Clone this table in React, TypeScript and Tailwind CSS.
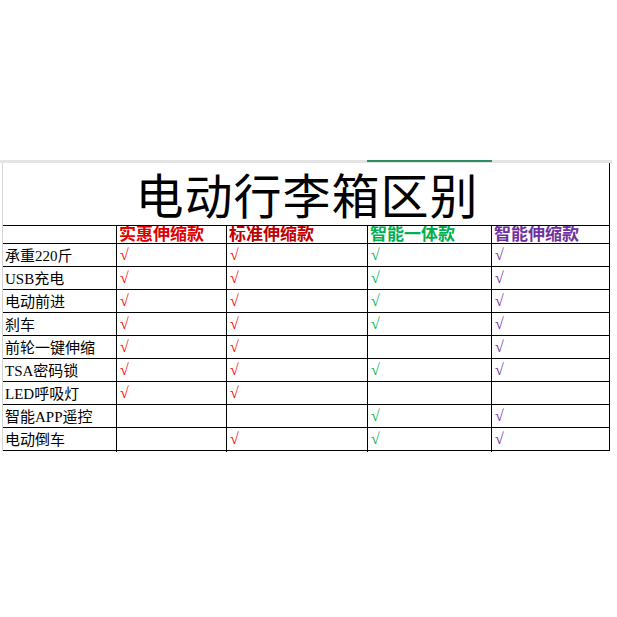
const FONT = '"Liberation Serif", "Noto Sans CJK SC", serif';

type Mark = '' | 'v';

const features: { name: string; marks: [Mark, Mark, Mark, Mark] }[] = [
  { name: '承重220斤', marks: ['v', 'v', 'v', 'v'] },
  { name: 'USB充电', marks: ['v', 'v', 'v', 'v'] },
  { name: '电动前进', marks: ['v', 'v', 'v', 'v'] },
  { name: '刹车', marks: ['v', 'v', 'v', 'v'] },
  { name: '前轮一键伸缩', marks: ['v', 'v', '', 'v'] },
  { name: 'TSA密码锁', marks: ['v', 'v', 'v', 'v'] },
  { name: 'LED呼吸灯', marks: ['v', 'v', '', ''] },
  { name: '智能APP遥控', marks: ['', '', 'v', 'v'] },
  { name: '电动倒车', marks: ['', 'v', 'v', 'v'] },
];

const models = [
  { label: '实惠伸缩款', head: 'text-[#e00000]', check: 'text-[#ff0000]' },
  { label: '标准伸缩款', head: 'text-[#c00000]', check: 'text-[#ff0000]' },
  { label: '智能一体款', head: 'text-[#00b050]', check: 'text-[#00b050]' },
  { label: '智能伸缩款', head: 'text-[#7030a0]', check: 'text-[#7030a0]' },
];

const grid = 'grid grid-cols-[114px_110px_141px_124px_117px]';

export default function App() {
  return (
    <div className="w-[617px] h-[617px] bg-white pt-[160px]" style={{ fontFamily: FONT }}>
      {/* sheet column header strip */}
      <div className="h-[3px] w-[612px] bg-[#e4e4e4] flex">
        <div className="w-[367px]" />
        <div className="w-[125px] h-[2px] bg-[#2e8b62]" />
      </div>

      <div className="ml-[2px] w-[608px] border-l border-[#d4d4d4] border-r border-r-black">
        {/* title */}
        <div className="h-[63px] border-b border-black flex items-end justify-center pb-[3px] pl-[2px]">
          <span className="text-[48px] leading-none text-black tracking-[1px]">电动行李箱区别</span>
        </div>

        {/* header row */}
        <div className={`${grid} h-[18px] border-b border-black`}>
          <div className="border-r border-black" />
          {models.map((m, i) => (
            <div
              key={m.label}
              className={`${i < 3 ? 'border-r border-black' : ''} pl-[2px] text-[17px] font-bold leading-[18px] overflow-hidden whitespace-nowrap ${m.head}`}
            >
              {m.label}
            </div>
          ))}
        </div>

        {/* feature rows */}
        {features.map((f) => (
          <div key={f.name} className={`${grid} h-[23px] border-b border-black`}>
            <div className="border-r border-black pl-[2px] text-[15px] leading-[24px] text-black whitespace-nowrap">
              {f.name}
            </div>
            {f.marks.map((mk, i) => (
              <div
                key={i}
                className={`${i < 3 ? 'border-r border-black' : ''} pl-[3px] text-[16px] leading-[22px] ${models[i].check}`}
              >
                {mk ? '√' : ''}
              </div>
            ))}
          </div>
        ))}
      </div>
    </div>
  );
}
